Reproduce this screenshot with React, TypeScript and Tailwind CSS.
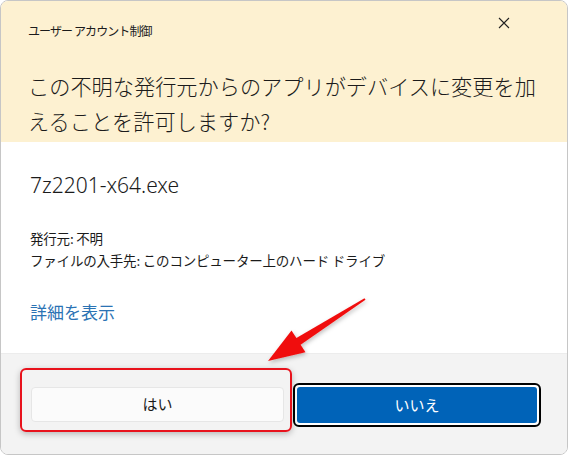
import React from "react";

const jp = { fontFamily: '"Noto Sans CJK JP", "Noto Sans", sans-serif' };

function CloseIcon() {
  return (
    <svg width="12" height="12" viewBox="0 0 12 12" className="text-[#222]">
      <path d="M1 1 L11 11 M11 1 L1 11" stroke="currentColor" strokeWidth="1.1" fill="none" />
    </svg>
  );
}

export default function App() {
  return (
    <div className="relative w-[570px] h-[456px] bg-white overflow-hidden" style={jp}>
      {/* dialog window */}
      <div className="w-[568px] h-[455px] border border-[#c6c6c6] rounded-[8px] overflow-hidden flex flex-col text-[#1b1b1b]">
        {/* warning header */}
        <div className="relative h-[141px] bg-[#fdf1d1] pl-[27px] pt-[20px]">
          <div className="text-[12px] leading-[20px] tracking-[-0.9px]">ユーザー アカウント制御</div>
          <div className="mt-[27px] w-[518px] text-[21.2px] leading-[35px] font-light">
            この不明な発行元からのアプリがデバイスに変更を加えることを許可しますか?
          </div>
          <div className="absolute right-[57px] top-[16px]">
            <CloseIcon />
          </div>
        </div>

        {/* body */}
        <div className="h-[211px] bg-white pl-[29px] pt-[29px]">
          <div className="text-[21px] leading-[28px] font-light" style={{ fontFamily: '"Noto Sans", sans-serif' }}>
            7z2201-x64.exe
          </div>
          <div className="mt-[28px] text-[13.5px] leading-[22px] tracking-[-0.2px]">
            <div>発行元: 不明</div>
            <div>ファイルの入手先: このコンピューター上のハード ドライブ</div>
          </div>
          <div className="mt-[30px] text-[17px] leading-[22px] text-[#2b73b4]">詳細を表示</div>
        </div>

        {/* buttons */}
        <div className="flex-1 bg-[#f3f3f3] border-t border-[#ececec] flex items-start pl-[30px] pt-[33px] gap-[13px]">
          <button className="w-[253px] h-[35px] rounded-[4px] bg-[#fbfbfb] border border-[#e6e6e6] text-[15px] text-[#1b1b1b]">
            はい
          </button>
          <div className="rounded-[6px] border-2 border-black p-[2px] -mt-[4px] -ml-[4px] bg-white">
            <button className="w-[240px] h-[36px] rounded-[3px] bg-[#0063b8] text-[15px] text-white">
              いいえ
            </button>
          </div>
        </div>
      </div>

      {/* annotation: red highlight box */}
      <div className="absolute left-[20px] top-[368px] w-[272px] h-[64px] rounded-[6px] border-2 border-[#e8121c] shadow-[0_2px_6px_rgba(0,0,0,0.25)]" />

      {/* annotation: arrow */}
      <svg className="absolute inset-0 pointer-events-none" width="570" height="456" viewBox="0 0 570 456">
        <defs>
          <filter id="sh" x="-20%" y="-20%" width="140%" height="140%">
            <feDropShadow dx="1" dy="2" stdDeviation="2" floodColor="#000" floodOpacity="0.25" />
          </filter>
        </defs>
        <path
          d="M365.5 299.8 L364.5 298.2 L296.4 337.9 L291.5 330.4 L268 361 L305.5 352.2 L300.6 344.7 Z"
          fill="#f01010"
          filter="url(#sh)"
        />
      </svg>
    </div>
  );
}
